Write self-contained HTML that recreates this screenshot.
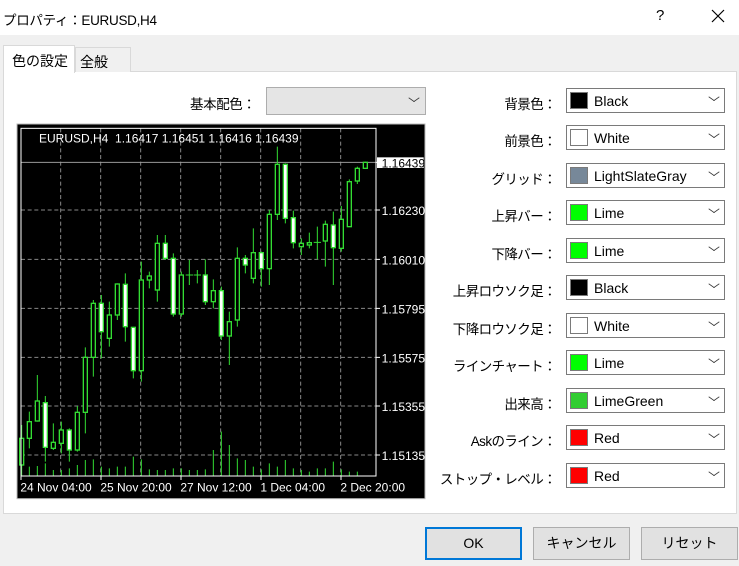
<!DOCTYPE html>
<html><head><meta charset="utf-8"><style>
*{margin:0;padding:0;box-sizing:border-box}
body{width:739px;height:566px;background:#f0f0f0;font-family:"Liberation Sans","Noto Sans CJK JP",sans-serif;font-size:14px;color:#000;position:relative;overflow:hidden}
.abs{position:absolute}
.title{left:0;top:0;width:739px;height:35px;background:#fff}
.panel{left:3px;top:71px;width:734px;height:443px;background:#fff;border:1px solid #d9d9d9}
.lbl{position:absolute;right:183px;text-align:right;font-size:13.5px;letter-spacing:-0.6px;white-space:nowrap}
.cb{position:absolute;left:566px;width:159px;height:25px;border:1px solid #7a7a7a;background:#fff}
.cb .sw{position:absolute;left:3px;top:3px;width:18px;height:17px;border:1px solid #7a7a7a}
.cb .t{position:absolute;left:27px;top:4px;font-size:14px}
.cb .ar{position:absolute;right:6px;top:4px;width:8px;height:8px;border-right:1px solid #333;border-bottom:1px solid #333;transform:scale(1,.7) rotate(45deg)}
.btn{position:absolute;top:527px;width:97px;height:33px;background:#e1e1e1;border:1px solid #adadad;text-align:center;line-height:31px;font-size:14px}
</style></head><body>
<div class="abs title"></div>
<div class="abs" style="left:3px;top:9px;font-size:13.5px;letter-spacing:-0.3px">プロパティ：EURUSD,H4</div>
<div class="abs" style="left:656px;top:7px;font-size:15px">?</div>
<svg class="abs" style="left:711px;top:9px" width="14" height="14"><path d="M1 1L13 13M13 1L1 13" stroke="#000" stroke-width="1.2"/></svg>
<div class="abs panel"></div>
<div class="abs" style="left:3px;top:45px;width:72px;height:28px;background:#fff;border:1px solid #d9d9d9;border-bottom:none;padding:5px 0 0 8px;font-size:14px">色の設定</div>
<div class="abs" style="left:75px;top:47px;width:56px;height:25px;background:#f0f0f0;border:1px solid #d9d9d9;border-bottom:none;padding:4px 0 0 4px;font-size:14px">全般</div>
<div class="abs" style="left:190px;top:93px;font-size:13.5px;letter-spacing:-0.4px">基本配色：</div>
<div class="abs" style="left:266px;top:87px;width:160px;height:28px;background:#e5e5e5;border:1px solid #adadad"><div style="position:absolute;right:7px;top:6px;width:8px;height:8px;border-right:1px solid #333;border-bottom:1px solid #333;transform:scale(1,.7) rotate(45deg)"></div></div>

<svg class="abs" style="left:15px;top:120px" width="415" height="380" viewBox="0 0 1245 1140">
<rect x="6" y="12" width="1224" height="1124" fill="#000" stroke="#bbb" stroke-width="3"/>
<g stroke="#888" stroke-width="3" stroke-dasharray="12,8">
<path d="M137 25V1068M257 25V1068M377 25V1068M497 25V1068M617 25V1068M737 25V1068M857 25V1068M977 25V1068"/>
<path d="M18 270H1083M18 418H1083M18 565H1083M18 712H1083M18 858H1083M18 1005H1083"/>
</g>
<path d="M18 127H1083" stroke="#999" stroke-width="3"/>
<g stroke="#33dd33" stroke-width="3">
<path d="M20 1068V1030M43 1068V1040M67 1068V1038M91 1068V1030M115 1068V1050M139 1068V1050M163 1068V1045M187 1068V1035M211 1068V1020M235 1068V1018M259 1068V1040M283 1068V1045M307 1068V1040M331 1068V1040M355 1068V1010M379 1068V1018M403 1068V1048M427 1068V1050M451 1068V1050M475 1068V1045M499 1068V1045M523 1068V1050M547 1068V1050M571 1068V1048M595 1068V990M619 1068V935M643 1068V975M667 1068V1015M691 1068V1020M715 1068V1040M739 1068V1048M763 1068V1030M787 1068V1040M811 1068V1020M835 1068V1045M859 1068V1050M883 1068V1055M907 1068V1045M931 1068V1045M955 1068V1025M979 1068V1048M1003 1068V1055M1027 1068V1055"/>
<path d="M20 915V1035M43 875V985M67 765V905M91 828V1025M115 910V990M139 905V1000M163 925V1025M187 858V995M211 682V940M235 540V770M259 525V715M283 545V680M307 490V600M331 460V665M355 622V775M379 425V785M403 455V505M427 345V545M451 345V420M475 400V590M499 455V590M523 420V495M547 450V490M571 418V555M595 478V565M619 500V660M643 575V735M667 382V620M691 405V460M715 325V490M739 395V500M763 270V495M787 80V300M811 130V310M835 272V385M859 355V405M883 338V385M907 320V418M931 302V440M955 275V495M979 258V395M1003 178V320M1027 140V192M1051 125V145"/>
<path d="M512 465H534M536 465H558M896 367H918"/>
</g>
<g stroke="#33dd33" stroke-width="4" fill="#000">
<rect x="14" y="955" width="12" height="80"/><rect x="37" y="905" width="12" height="50"/><rect x="61" y="843" width="12" height="60"/><rect x="109" y="967" width="12" height="18"/><rect x="133" y="930" width="12" height="40"/><rect x="181" y="877" width="12" height="113"/><rect x="205" y="712" width="12" height="165"/><rect x="229" y="550" width="12" height="162"/><rect x="277" y="585" width="12" height="70"/><rect x="301" y="492" width="12" height="93"/><rect x="373" y="480" width="12" height="272"/><rect x="397" y="468" width="12" height="12"/><rect x="421" y="370" width="12" height="140"/><rect x="493" y="465" width="12" height="117"/><rect x="589" y="512" width="12" height="33"/><rect x="637" y="605" width="12" height="43"/><rect x="661" y="415" width="12" height="185"/><rect x="709" y="398" width="12" height="77"/><rect x="757" y="283" width="12" height="163"/><rect x="781" y="133" width="12" height="150"/><rect x="853" y="370" width="12" height="10"/><rect x="877" y="368" width="12" height="7"/><rect x="925" y="313" width="12" height="50"/><rect x="973" y="298" width="12" height="87"/><rect x="997" y="185" width="12" height="135"/><rect x="1021" y="145" width="12" height="38"/><rect x="1045" y="127" width="12" height="18"/>
</g>
<g stroke="#33dd33" stroke-width="4" fill="#fff">
<rect x="85" y="848" width="12" height="134"/><rect x="157" y="930" width="12" height="60"/><rect x="253" y="550" width="12" height="85"/><rect x="325" y="493" width="12" height="127"/><rect x="349" y="622" width="12" height="130"/><rect x="445" y="370" width="12" height="45"/><rect x="469" y="415" width="12" height="167"/><rect x="565" y="465" width="12" height="80"/><rect x="613" y="512" width="12" height="136"/><rect x="685" y="415" width="12" height="20"/><rect x="733" y="398" width="12" height="48"/><rect x="805" y="133" width="12" height="162"/><rect x="829" y="293" width="12" height="75"/><rect x="949" y="315" width="12" height="68"/>
</g>
<rect x="18" y="25" width="1065" height="1043" fill="none" stroke="#fff" stroke-width="3"/>
<path d="M18 1068V1080M258 1068V1080M498 1068V1080M738 1068V1080M978 1068V1080M1083 127H1095M1083 270H1095M1083 418H1095M1083 565H1095M1083 712H1095M1083 858H1095M1083 1005H1095" stroke="#fff" stroke-width="3"/>
<rect x="1086" y="112" width="140" height="32" fill="#fff"/>
<g font-family="Liberation Sans, sans-serif" font-size="36" fill="#fff">
<text x="72" y="68" xml:space="preserve">EURUSD,H4  1.16417 1.16451 1.16416 1.16439</text>
<text x="1100" y="142" fill="#000">1.16439</text>
<text x="1100" y="285">1.16230</text><text x="1100" y="433">1.16010</text><text x="1100" y="580">1.15795</text><text x="1100" y="727">1.15575</text><text x="1100" y="873">1.15355</text><text x="1100" y="1020">1.15135</text>
<text x="16" y="1115">24 Nov 04:00</text><text x="256" y="1115">25 Nov 20:00</text><text x="496" y="1115">27 Nov 12:00</text><text x="736" y="1115">1 Dec 04:00</text><text x="976" y="1115">2 Dec 20:00</text>
</g>
</svg>

<div class="lbl" style="top:93px">背景色：</div>
<div class="cb" style="top:88px"><div class="sw" style="background:#000"></div><div class="t">Black</div><div class="ar"></div></div>
<div class="lbl" style="top:130px">前景色：</div>
<div class="cb" style="top:125px"><div class="sw" style="background:#fff"></div><div class="t">White</div><div class="ar"></div></div>
<div class="lbl" style="top:168px">グリッド：</div>
<div class="cb" style="top:163px"><div class="sw" style="background:#778899"></div><div class="t">LightSlateGray</div><div class="ar"></div></div>
<div class="lbl" style="top:205px">上昇バー：</div>
<div class="cb" style="top:200px"><div class="sw" style="background:#0f0"></div><div class="t">Lime</div><div class="ar"></div></div>
<div class="lbl" style="top:243px">下降バー：</div>
<div class="cb" style="top:238px"><div class="sw" style="background:#0f0"></div><div class="t">Lime</div><div class="ar"></div></div>
<div class="lbl" style="top:280px">上昇ロウソク足：</div>
<div class="cb" style="top:275px"><div class="sw" style="background:#000"></div><div class="t">Black</div><div class="ar"></div></div>
<div class="lbl" style="top:318px">下降ロウソク足：</div>
<div class="cb" style="top:313px"><div class="sw" style="background:#fff"></div><div class="t">White</div><div class="ar"></div></div>
<div class="lbl" style="top:355px">ラインチャート：</div>
<div class="cb" style="top:350px"><div class="sw" style="background:#0f0"></div><div class="t">Lime</div><div class="ar"></div></div>
<div class="lbl" style="top:393px">出来高：</div>
<div class="cb" style="top:388px"><div class="sw" style="background:#32cd32"></div><div class="t">LimeGreen</div><div class="ar"></div></div>
<div class="lbl" style="top:430px">Askのライン：</div>
<div class="cb" style="top:425px"><div class="sw" style="background:#f00"></div><div class="t">Red</div><div class="ar"></div></div>
<div class="lbl" style="top:468px">ストップ・レベル：</div>
<div class="cb" style="top:463px"><div class="sw" style="background:#f00"></div><div class="t">Red</div><div class="ar"></div></div>

<div class="btn" style="left:425px;border:2px solid #0078d7;line-height:29px">OK</div>
<div class="btn" style="left:533px">キャンセル</div>
<div class="btn" style="left:641px">リセット</div>
</body></html>
